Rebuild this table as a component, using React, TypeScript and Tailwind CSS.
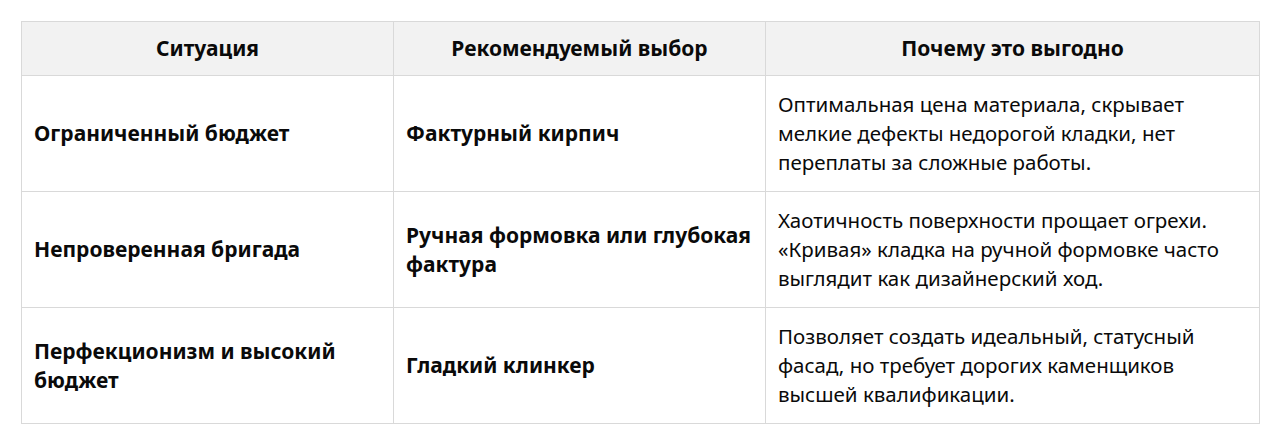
const rows = [
  {
    situation: "Ограниченный бюджет",
    choice: "Фактурный кирпич",
    why: "Оптимальная цена материала, скрывает мелкие дефекты недорогой кладки, нет переплаты за сложные работы.",
  },
  {
    situation: "Непроверенная бригада",
    choice: "Ручная формовка или глубокая фактура",
    why: "Хаотичность поверхности прощает огрехи. «Кривая» кладка на ручной формовке часто выглядит как дизайнерский ход.",
  },
  {
    situation: "Перфекционизм и высокий бюджет",
    choice: "Гладкий клинкер",
    why: "Позволяет создать идеальный, статусный фасад, но требует дорогих каменщиков высшей квалификации.",
  },
];

export default function App() {
  return (
    <div className="bg-white px-[21px] pt-[21px] font-['Noto_Sans',sans-serif] text-[20.5px] leading-[29px] text-[#0a0a0a]">
      <table className="w-[1239px] table-fixed border-collapse border border-[#d9d9d9]">
        <colgroup>
          <col className="w-[372px]" />
          <col className="w-[372px]" />
          <col />
        </colgroup>
        <thead>
          <tr className="bg-[#f2f2f2] text-[21px]">
            <th className="border border-[#d9d9d9] px-3 py-3 text-center font-bold">Ситуация</th>
            <th className="border border-[#d9d9d9] px-3 py-3 text-center font-bold">Рекомендуемый выбор</th>
            <th className="border border-[#d9d9d9] px-3 py-3 text-center font-bold">Почему это выгодно</th>
          </tr>
        </thead>
        <tbody>
          {rows.map((r) => (
            <tr key={r.situation}>
              <td className="border border-[#d9d9d9] px-3 py-[14px] align-middle text-[21px] font-bold">{r.situation}</td>
              <td className="border border-[#d9d9d9] px-3 py-[14px] align-middle text-[21px] font-bold">{r.choice}</td>
              <td className="border border-[#d9d9d9] px-3 py-[14px] align-middle">{r.why}</td>
            </tr>
          ))}
        </tbody>
      </table>
    </div>
  );
}
